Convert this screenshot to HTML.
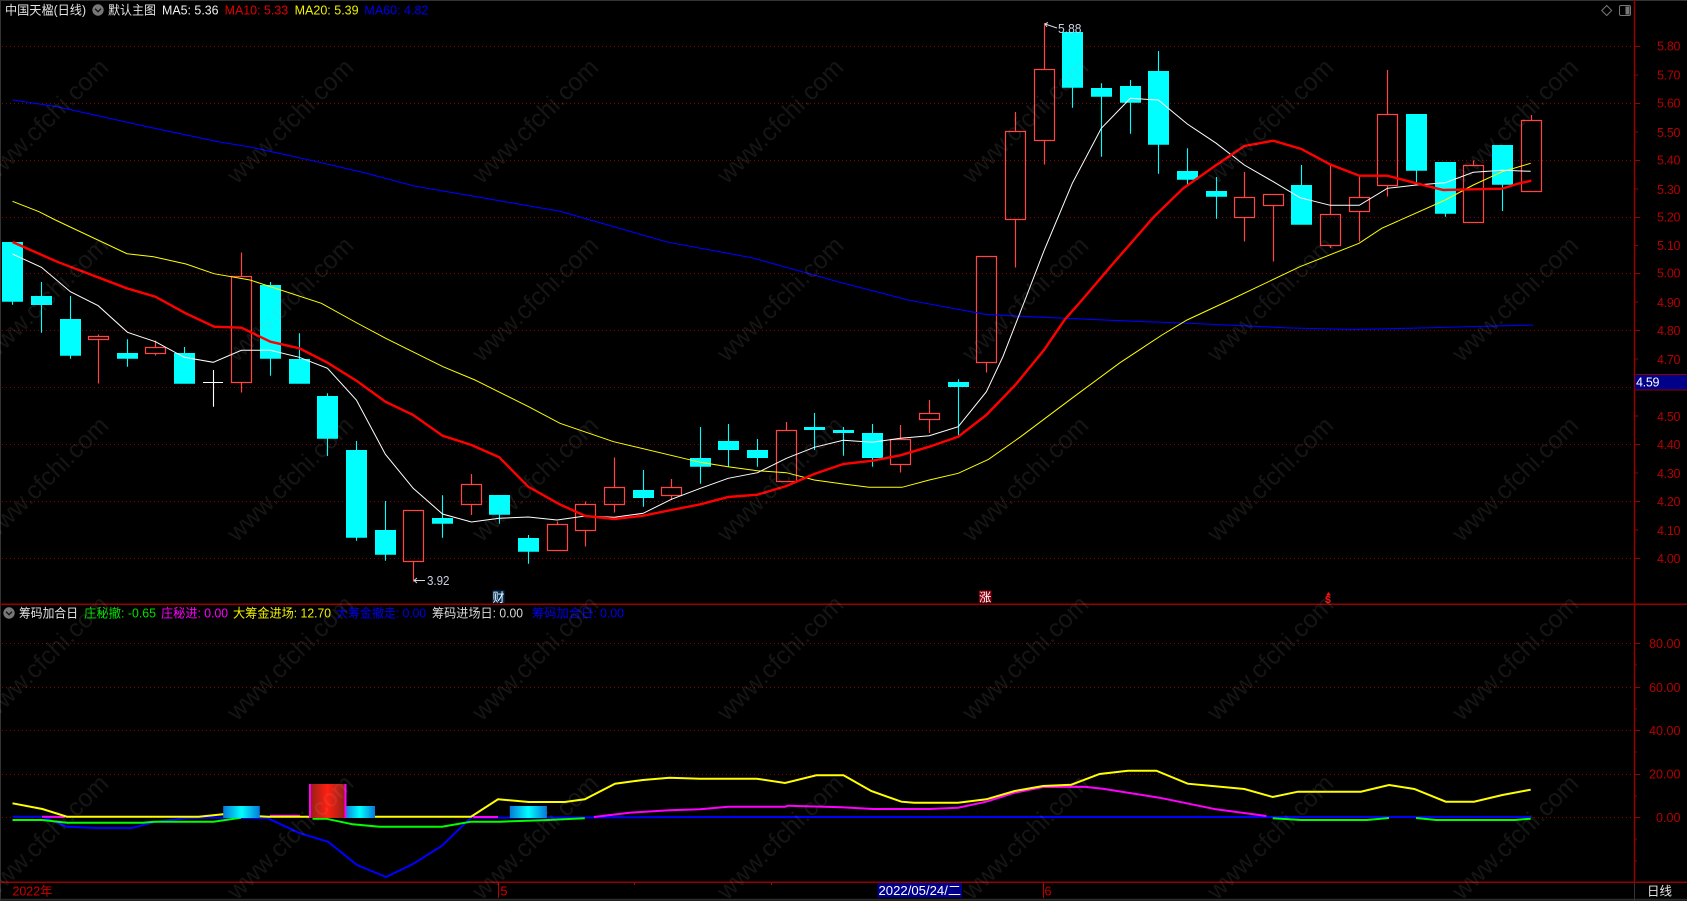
<!DOCTYPE html>
<html lang="zh"><head><meta charset="utf-8"><title>中国天楹(日线)</title>
<style>
html,body{margin:0;padding:0;background:#000;width:1687px;height:901px;overflow:hidden}
svg{display:block;position:absolute;left:0;top:0}
text{font-family:"Liberation Sans","Noto Sans CJK SC",sans-serif;font-size:12.5px}
.wm text{font-size:25px;fill:#aaa;opacity:.12;text-anchor:middle}
</style></head><body>
<svg width="1687" height="901" viewBox="0 0 1687 901" xmlns="http://www.w3.org/2000/svg">
<defs>
<linearGradient id="cy" x1="0" x2="1" y1="0" y2="0"><stop offset="0" stop-color="#0878d8"/><stop offset=".5" stop-color="#00ffff"/><stop offset="1" stop-color="#0878d8"/></linearGradient>
<linearGradient id="rd" x1="0" x2="1" y1="0" y2="0"><stop offset="0" stop-color="#8c2018"/><stop offset=".5" stop-color="#ff2010"/><stop offset="1" stop-color="#8c2018"/></linearGradient>
</defs>
<rect width="1687" height="901" fill="#000"/>
<!-- frame -->
<path d="M0 .5H1687M.5 0V901" stroke="#333" fill="none"/>
<path d="M0 899.7H1687" stroke="#2c2c2c" stroke-width="2" fill="none"/>
<path d="M1634.5 883V901" stroke="#333" fill="none"/>
<!-- dotted grid -->
<g stroke="#8a0000" stroke-dasharray="1 3" fill="none">
<path d="M2 46.5H1634M2 103.5H1634M2 160.5H1634M2 217.5H1634M2 273.5H1634M2 330.5H1634M2 387.5H1634M2 444.5H1634M2 501.5H1634M2 558.5H1634"/>
<path d="M2 643.5H1634M2 687.5H1634M2 730.5H1634M2 774.5H1634M2 817.5H1634"/>
</g>
<!-- axis -->
<g stroke="#960000" fill="none">
<path stroke-width="1.5" d="M0 604.3H1687M0 882.3H1687M1634.5 0V883"/>
<path d="M1634 46.5h6M1634 75h4M1634 103.5h6M1634 132h4M1634 160.5h6M1634 189h4M1634 217.5h6M1634 245.5h4M1634 273.5h6M1634 302h4M1634 330.5h6M1634 359h4M1634 416h4M1634 444.5h6M1634 473h4M1634 501.5h6M1634 530h4M1634 558.5h6"/>
<path d="M1634 643.5h6M1634 665h3M1634 687.5h6M1634 709h3M1634 730.5h6M1634 752h3M1634 774.5h6M1634 796h3M1634 817.5h6M1634 839h3M1634 861h3"/>
<path stroke="#c00000" d="M498.5 883V898M634.5 883V885M771.5 883V885M1043.5 883V898"/>
</g>
<!-- cyan candles -->
<path fill="#00ffff" d="M2 242h21V301.7h-21zM31 296h21v9h-21zM60 319h21v36.7h-21zM117 353h21v5.7h-21zM174 353h21v30.7h-21zM260 285h21v73.7h-21zM289 359h21v24.7h-21zM317 396h21v42.7h-21zM346 450h21v87.7h-21zM375 530h21v24.7h-21zM432 518h21v5.7h-21zM489 495h21v19.7h-21zM518 538h21v13.7h-21zM633 490h21v8h-21zM690 458h21v8.7h-21zM718 441h21v9h-21zM747 450h21v8h-21zM804 427h21v3h-21zM833 430h21v3h-21zM862 433h21v25h-21zM948 382h21v5h-21zM1062 32h21v55.7h-21zM1091 88h21v8.7h-21zM1120 86h21v16.7h-21zM1148 71h21v73.7h-21zM1177 171h21v8.7h-21zM1206 191h21v5.7h-21zM1291 185h21v39.7h-21zM1406 114h21v56.7h-21zM1435 162h21v51.7h-21zM1492 145h21v39.7h-21z"/>
<path stroke="#00ffff" stroke-width="1.1" fill="none" d="M12.5 301V304.7M41.5 282V332.7M70.5 296V358.7M127.5 339.3V366.7M184.5 347V353M270.5 282V375.7M299.5 333.3V359M327.5 393.3V456M356.5 441V540.7M385.5 501V560.7M442.5 495.3V537.7M499.5 514V523.7M528.5 535V563.7M643.5 470V506.7M700.5 427V483.7M728.5 424V466.7M757.5 439V466.7M814.5 413V450M843.5 427V455.7M872.5 424V466.7M958.5 379.3V436M1072.5 87V107.7M1101.5 83.3V156.7M1130.5 80V133.7M1158.5 51V173.7M1187.5 148.3V185.7M1216.5 177V218.7M1301.5 165V185M1416.5 170V182.7M1445.5 213V216.7M1502.5 184V211"/>
<!-- white doji -->
<path stroke="#fff" stroke-width="1.1" fill="none" d="M203 382.5H223M213.5 370V406.7"/>
<!-- red candles -->
<path stroke="#ff4444" stroke-width="1.2" fill="none" d="M98.5 334.5V336.5M98.5 339.5V383.5M88.5 336.5h20v3h-20zM155.5 340.5V347.5M155.5 353.5V355.5M145.5 347.5h20v6h-20zM241.5 252.5V276.5M241.5 382.5V392.5M231.5 276.5h20V382.5h-20zM413.5 561.5V581.5M403.5 510.5h20V561.5h-20zM471.5 474V484.5M471.5 504.5V515M461.5 484.5h20V504.5h-20zM557.5 521.5V524.5M547.5 524.5h20V550.5h-20zM585.5 501.5V504.5M585.5 530.5V546.5M575.5 504.5h20V530.5h-20zM614.5 457.5V487.5M614.5 504.5V512.5M604.5 487.5h20V504.5h-20zM671.5 479V487.5M671.5 495.5V500M661.5 487.5h20V495.5h-20zM786.5 422V430.5M776.5 430.5h20V481.5h-20zM900.5 425V439.5M900.5 464.5V472.5M890.5 439.5h20V464.5h-20zM929.5 400V413.5M929.5 419.5V433M919.5 413.5h20V419.5h-20zM986.5 362.5V372.5M976.5 256.5h20V362.5h-20zM1015.5 112V131.5M1015.5 219.5V267.5M1005.5 131.5h20V219.5h-20zM1044.5 23V69.5M1044.5 140.5V164.5M1034.5 69.5h20V140.5h-20zM1244.5 172V197.5M1244.5 217.5V241.5M1234.5 197.5h20V217.5h-20zM1273.5 205.5V261.5M1263.5 194.5h20V205.5h-20zM1330.5 165V214.5M1330.5 245.5V248M1320.5 214.5h20V245.5h-20zM1359.5 175.5V197.5M1359.5 211.5V241.5M1349.5 197.5h20V211.5h-20zM1387.5 70V114.5M1387.5 185.5V196.5M1377.5 114.5h20V185.5h-20zM1473.5 160.5V165.5M1463.5 165.5h20V222.5h-20zM1531.5 115V120.5M1521.5 120.5h20V191.5h-20z"/>
<!-- MA60 -->
<polyline fill="none" stroke="#0000ff" stroke-width="1.1" points="12.5,100 57,106.7 150,127.3 218,141.7 250,147 314,161 364,172.7 414,186 482,197.7 560,211.3 667,242 753,258 839,282 908,300 985,314.3 1021,316.3 1120,320.7 1183,323 1291,328 1355,329.6 1440,327.5 1533,325"/>
<!-- MA20 -->
<polyline fill="none" stroke="#ffff00" stroke-width="1" points="12.5,201.3 39,211.7 55.4,220 127,253.7 153.6,256.7 186,264 214,273.7 250,280 321.4,303.3 357,323 385.7,338.3 443,366.7 475,380 528.6,406.7 560,423.3 613.6,441.7 700.4,462.3 728,466.7 757.5,470.7 786.4,472.7 814.3,480 843.2,484 869,487.3 902,487.3 929.3,480 958.2,473.3 988.6,459.3 1020.7,436.7 1074,396.7 1120,362.7 1162,335 1187,320 1230,300 1300,266.7 1359,243.3 1381.7,228.3 1445.3,200 1473.3,185 1502.3,171.7 1530.7,163.3"/>
<!-- MA5 -->
<polyline fill="none" stroke="#ffffff" stroke-width="1" points="12.5,254 41.4,267.3 70.4,291.7 98.2,305.7 127.5,332.3 155.4,341.7 184.3,357.3 213.2,362.3 241.4,350.3 270.4,350.3 299.3,357.3 327.5,368.3 356.4,400 385.4,454.3 413.2,488.3 442.5,514 471.4,522 499.3,518.3 528.2,517 557,520 585.4,516 614.3,517.3 643.2,513.3 671.4,499.3 700.4,488.3 728.2,478.3 757.5,472.7 786.4,458.3 814.3,447.3 843.2,440.3 872.5,442.3 900.4,438.3 929.3,435.7 958.2,426.7 986.4,391.7 1002.9,356.7 1025,300 1044.3,250 1072.3,183.3 1101.3,128.3 1130.3,98.3 1158.3,100 1187.3,124 1216.3,143.3 1244.3,165 1273.3,181.7 1300,197.7 1330.3,205.3 1359.3,205.3 1387.3,188.3 1416.3,185 1445.3,182.7 1473.3,172.3 1502.3,170.3 1530.7,171.3"/>
<!-- MA10 -->
<polyline fill="none" stroke="#ff0000" stroke-width="2.4" points="12.5,242 57,261.7 126.8,288.3 155.4,296.7 185.7,313.3 214.3,326.7 241.4,327.7 270.4,341.7 299.3,348.3 327.5,362.7 356.4,380.7 385.4,401.7 413.2,415 442.5,435.7 471.4,445 499.3,457.3 528.2,486.7 560,504.5 585.4,516 614.3,519 643.2,515.7 671.4,510 700.4,504.3 728.2,497 757.5,494.7 786.4,486 814.3,474 843.2,464 872.5,460.7 900.4,455.3 929.3,446.7 958.2,436.7 986.4,415 1015.3,385 1044,350 1065,319.3 1082,300 1113.3,263.3 1154,216.7 1183.3,188.3 1216.3,165 1244.3,146 1273.3,140.7 1301.3,149 1330.3,164.5 1359.3,175.7 1387.3,175.7 1416.3,183.3 1443.3,190 1473.3,189.3 1502.3,188.7 1516.7,184 1531.3,180.7"/>
<!-- hi/lo marks -->
<path stroke="#d8d8e8" fill="none" d="M414 580.5H425M414 580.5l3-2.5M414 580.5l3 2.5M1045 24L1057 28M1045 24l3-1.5M1045 24l2 3"/>
<text x="427" y="585" fill="#c8d0e0" textLength="22.5" lengthAdjust="spacingAndGlyphs">3.92</text>
<text x="1058" y="33" fill="#c8d0e0" textLength="23.5" lengthAdjust="spacingAndGlyphs">5.88</text>
<!-- header -->
<text x="5" y="14.5" fill="#e4e4e4" textLength="81" lengthAdjust="spacingAndGlyphs">中国天楹(日线)</text>
<circle cx="98" cy="10" r="5.7" fill="#777"/><path d="M95 8.7l3 3 3-3" stroke="#111" stroke-width="1.3" fill="none"/>
<text x="108" y="14.5" fill="#e4e4e4" textLength="48" lengthAdjust="spacingAndGlyphs">默认主图</text>
<text x="162" y="14.5" fill="#f0f0f0" textLength="56.6" lengthAdjust="spacingAndGlyphs">MA5: 5.36</text>
<text x="224.6" y="14.5" fill="#e00000" textLength="63.6" lengthAdjust="spacingAndGlyphs">MA10: 5.33</text>
<text x="294.6" y="14.5" fill="#f0f000" textLength="64" lengthAdjust="spacingAndGlyphs">MA20: 5.39</text>
<text x="364.4" y="14.5" fill="#0000e8" textLength="64" lengthAdjust="spacingAndGlyphs">MA60: 4.82</text>
<path d="M1606.7 5.5l5 5-5 5-5-5z" stroke="#777" fill="none"/>
<rect x="1619.5" y="5.5" width="11" height="10" rx="1.5" stroke="#777" fill="none"/><rect x="1625.5" y="6.5" width="4" height="8" fill="#777"/>
<!-- price labels -->
<g fill="#b40000">
<text x="1657" y="50.5" textLength="23.5">5.80</text><text x="1657" y="79.5" textLength="23.5">5.70</text><text x="1657" y="107.5" textLength="23.5">5.60</text><text x="1657" y="137" textLength="23.5">5.50</text><text x="1657" y="164.5" textLength="23.5">5.40</text><text x="1657" y="194" textLength="23.5">5.30</text><text x="1657" y="221.5" textLength="23.5">5.20</text><text x="1657" y="250" textLength="23.5">5.10</text><text x="1657" y="277.5" textLength="23.5">5.00</text><text x="1657" y="307" textLength="23.5">4.90</text><text x="1657" y="335" textLength="23.5">4.80</text><text x="1657" y="364" textLength="23.5">4.70</text><text x="1657" y="421" textLength="23.5">4.50</text><text x="1657" y="449" textLength="23.5">4.40</text><text x="1657" y="478" textLength="23.5">4.30</text><text x="1657" y="506" textLength="23.5">4.20</text><text x="1657" y="535" textLength="23.5">4.10</text><text x="1657" y="563" textLength="23.5">4.00</text>
</g>
<rect x="1634.5" y="374.5" width="53" height="15.5" fill="#000088" stroke="#8c0000"/>
<text x="1636" y="386.5" fill="#fff" textLength="23.5">4.59</text>
<!-- markers row -->
<rect x="492.5" y="590.5" width="12" height="12.5" fill="#003058"/>
<text x="492.5" y="601.5" fill="#fff" style="font-size:12px">财</text>
<rect x="979" y="590.5" width="12.5" height="12" fill="#8a0010"/>
<text x="979.2" y="601.3" fill="#fff" style="font-size:12px">涨</text>
<path d="M1328.5 592l2.5 3.5h-5z" fill="#ff1010"/>
<text x="1325" y="603" fill="#ff1010" style="font-size:10.5px;font-weight:bold">$</text>
<!-- sub-panel lines -->
<g fill="none" stroke-width="2">
<polyline stroke="#0000ff" points="12.5,816.7 42.4,816.7 67,826.7 98,828 131.7,828 156,821.7 185,818.3 213.4,817.5 268,818.3 300,833.3 328,841.7 357,865 386,877 413,864 442,845.7 471,817.7 700,817 1530.7,817"/>
<polyline stroke="#ff00ff" points="42,816.7 65,817"/>
<polyline stroke="#ff00ff" points="270,815.7 300,815.7"/>
<polyline stroke="#ff00ff" points="473,817 498,817"/>
<polyline stroke="#ff00ff" points="593.8,817 629.5,812.7 669.6,810.3 700,809.3 728.3,806.7 785,806.7 788,805.7 841.6,807.3 873,809 929.7,809 958,807.7 986.3,801.7 1014.7,792.7 1043,787 1083.9,786.7 1102.8,788.7 1159.4,797.7 1216,809.3 1266.4,816"/>
<polyline stroke="#00ff00" points="12.5,820 42.4,820 67,822.7 143,822.7 154,821.7 213.4,821.7 241,817.7"/>
<polyline stroke="#00ff00" points="312.5,818.7 326,818.7 352.7,824.3 379.5,826.7 442,826.7 471,821.7 500,821.7 542.4,820.3 584.8,818.3"/>
<polyline stroke="#00ff00" points="1272.7,818.3 1301,820 1367,820 1389,818"/>
<polyline stroke="#00ff00" points="1416,818 1436.3,820 1515,820 1530.7,818.7"/>
<polyline stroke="#ffff00" points="12.5,803.3 42.4,809 67,816.7 198.7,816.7 223,814.3 268,816.7 471,816.7 498,799.3 529,802 564.7,802 584.8,799.3 615,783.7 643,780 669.6,777.7 700,778.7 756.6,778.7 785,783 816.4,775.3 843.5,775.3 871.2,791 901.4,801.7 914,802.7 958,802.7 986.3,799.3 1014.7,791 1043,786 1071.3,784.7 1099.6,774 1128,770.7 1156.3,770.7 1187.7,783.7 1244.4,789 1272.7,797 1297.9,791.7 1360.8,791.7 1389,785 1414.3,789 1445.8,801.7 1474,801.7 1502.4,795 1530.7,789.7"/>
</g>
<!-- sub-panel bars -->
<rect x="223.2" y="806" width="36.6" height="12" fill="url(#cy)"/>
<rect x="344.2" y="806" width="30.8" height="12" fill="url(#cy)"/>
<rect x="509.8" y="806" width="37.1" height="12" fill="url(#cy)"/>
<rect x="309" y="784" width="37" height="34" fill="url(#rd)"/>
<path d="M310 784V818M345.5 784V818" stroke="#ff00ff" stroke-width="2" fill="none"/>
<!-- sub-panel header -->
<circle cx="9" cy="613" r="5.7" fill="#777"/><path d="M6 611.7l3 3 3-3" stroke="#111" stroke-width="1.3" fill="none"/>
<text x="19" y="617.5" fill="#e4e4e4" textLength="59" lengthAdjust="spacingAndGlyphs">筹码加合日</text>
<text x="84" y="617.5" fill="#00e000" textLength="72" lengthAdjust="spacingAndGlyphs">庄秘撤: -0.65</text>
<text x="161" y="617.5" fill="#ff00ff" textLength="67" lengthAdjust="spacingAndGlyphs">庄秘进: 0.00</text>
<text x="233" y="617.5" fill="#f0f000" textLength="98" lengthAdjust="spacingAndGlyphs">大筹金进场: 12.70</text>
<text x="336" y="617.5" fill="#0000f0" textLength="90" lengthAdjust="spacingAndGlyphs">大筹金撤走: 0.00</text>
<text x="432" y="617.5" fill="#d8d8d8" textLength="91" lengthAdjust="spacingAndGlyphs">筹码进场日: 0.00</text>
<text x="532" y="617.5" fill="#0000f0" textLength="92" lengthAdjust="spacingAndGlyphs">筹码加合日: 0.00</text>
<!-- sub axis labels -->
<g fill="#b40000">
<text x="1649" y="648" textLength="31.5" lengthAdjust="spacingAndGlyphs">80.00</text>
<text x="1649" y="692" textLength="31.5" lengthAdjust="spacingAndGlyphs">60.00</text>
<text x="1649" y="735" textLength="31.5" lengthAdjust="spacingAndGlyphs">40.00</text>
<text x="1649" y="778.5" textLength="31.5" lengthAdjust="spacingAndGlyphs">20.00</text>
<text x="1656" y="822" textLength="24.5" lengthAdjust="spacingAndGlyphs">0.00</text>
</g>
<!-- date axis -->
<text x="12.5" y="895.5" fill="#d00000" textLength="40" lengthAdjust="spacingAndGlyphs">2022年</text>
<text x="500.5" y="895.5" fill="#e00000">5</text>
<text x="1044.5" y="895.5" fill="#c80000">6</text>
<rect x="877.5" y="883" width="84.5" height="14.5" fill="#000088"/>
<text x="878.5" y="895" fill="#fff" textLength="82.5" lengthAdjust="spacingAndGlyphs">2022/05/24/二</text>
<text x="1647" y="895.5" fill="#e4e4e4" textLength="25" lengthAdjust="spacingAndGlyphs">日线</text>
<!-- watermark -->
<g class="wm">
<text transform="translate(51,127) rotate(-44.5)">www.cfchi.com</text><text transform="translate(296,127) rotate(-44.5)">www.cfchi.com</text><text transform="translate(541,127) rotate(-44.5)">www.cfchi.com</text><text transform="translate(786,127) rotate(-44.5)">www.cfchi.com</text><text transform="translate(1031,127) rotate(-44.5)">www.cfchi.com</text><text transform="translate(1276,127) rotate(-44.5)">www.cfchi.com</text><text transform="translate(1521,127) rotate(-44.5)">www.cfchi.com</text>
<text transform="translate(51,305) rotate(-44.5)">www.cfchi.com</text><text transform="translate(296,305) rotate(-44.5)">www.cfchi.com</text><text transform="translate(541,305) rotate(-44.5)">www.cfchi.com</text><text transform="translate(786,305) rotate(-44.5)">www.cfchi.com</text><text transform="translate(1031,305) rotate(-44.5)">www.cfchi.com</text><text transform="translate(1276,305) rotate(-44.5)">www.cfchi.com</text><text transform="translate(1521,305) rotate(-44.5)">www.cfchi.com</text>
<text transform="translate(51,485) rotate(-44.5)">www.cfchi.com</text><text transform="translate(296,485) rotate(-44.5)">www.cfchi.com</text><text transform="translate(541,485) rotate(-44.5)">www.cfchi.com</text><text transform="translate(786,485) rotate(-44.5)">www.cfchi.com</text><text transform="translate(1031,485) rotate(-44.5)">www.cfchi.com</text><text transform="translate(1276,485) rotate(-44.5)">www.cfchi.com</text><text transform="translate(1521,485) rotate(-44.5)">www.cfchi.com</text>
<text transform="translate(51,664) rotate(-44.5)">www.cfchi.com</text><text transform="translate(296,664) rotate(-44.5)">www.cfchi.com</text><text transform="translate(541,664) rotate(-44.5)">www.cfchi.com</text><text transform="translate(786,664) rotate(-44.5)">www.cfchi.com</text><text transform="translate(1031,664) rotate(-44.5)">www.cfchi.com</text><text transform="translate(1276,664) rotate(-44.5)">www.cfchi.com</text><text transform="translate(1521,664) rotate(-44.5)">www.cfchi.com</text>
<text transform="translate(51,843) rotate(-44.5)">www.cfchi.com</text><text transform="translate(296,843) rotate(-44.5)">www.cfchi.com</text><text transform="translate(541,843) rotate(-44.5)">www.cfchi.com</text><text transform="translate(786,843) rotate(-44.5)">www.cfchi.com</text><text transform="translate(1031,843) rotate(-44.5)">www.cfchi.com</text><text transform="translate(1276,843) rotate(-44.5)">www.cfchi.com</text><text transform="translate(1521,843) rotate(-44.5)">www.cfchi.com</text>
</g>
</svg>
</body></html>
